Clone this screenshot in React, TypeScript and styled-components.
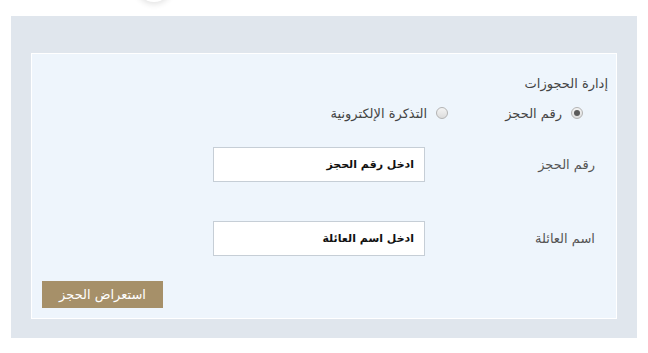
import React from "react";
import styled, { createGlobalStyle } from "styled-components";

const GlobalStyle = createGlobalStyle`
  html, body {
    margin: 0;
    padding: 0;
    background: #ffffff;
    font-family: "DejaVu Sans", "Noto Sans", sans-serif;
  }
`;

function App() {
  return (
    <>
      <GlobalStyle />
      <Page>
        <TopShadow />
        <Outer>
          <Card dir="rtl">
            <Heading>إدارة الحجوزات</Heading>
            <RadioRow>
              <RadioOption>
                <RadioInput type="radio" name="mode" defaultChecked />
                <RadioLabel>رقم الحجز</RadioLabel>
              </RadioOption>
              <RadioOption>
                <RadioInput type="radio" name="mode" />
                <RadioLabel>التذكرة الإلكترونية</RadioLabel>
              </RadioOption>
            </RadioRow>
            <FieldRow $top={24}>
              <FieldLabel>رقم الحجز</FieldLabel>
              <TextInput placeholder="ادخل رقم الحجز" />
            </FieldRow>
            <FieldRow $top={39}>
              <FieldLabel>اسم العائلة</FieldLabel>
              <TextInput placeholder="ادخل اسم العائلة" />
            </FieldRow>
            <Actions>
              <SubmitButton type="button">استعراض الحجز</SubmitButton>
            </Actions>
          </Card>
        </Outer>
      </Page>
    </>
  );
}

export default App;

const Page = styled.div({
  position: "relative",
  padding: "16px 11px 15px 11px",
  overflow: "hidden",
});

const TopShadow = styled.div({
  position: "absolute",
  top: -34,
  left: 136,
  width: 36,
  height: 36,
  borderRadius: "50%",
  background: "#ffffff",
  boxShadow: "0 2px 6px rgba(0,0,0,0.12)",
});

const Outer = styled.div({
  background: "#e0e6ed",
  padding: "37px 20px 19px 20px",
});

const Card = styled.div({
  background: "#eef5fc",
  border: "1px solid #ffffff",
  padding: "20px 8px 10px 10px",
});

const Heading = styled.div({
  fontSize: 13,
  lineHeight: "20px",
  color: "#444",
});

const RadioRow = styled.div({
  display: "flex",
  alignItems: "center",
  gap: 57,
  marginTop: 9,
  paddingRight: 25,
  height: 20,
});

const RadioOption = styled.label({
  display: "flex",
  alignItems: "center",
  gap: 9,
});

const RadioInput = styled.input({
  appearance: "none",
  margin: 0,
  width: 12,
  height: 12,
  borderRadius: "50%",
  border: "1px solid #b3b3b3",
  background: "linear-gradient(#f4f4f4, #dcdcdc)",
  position: "relative",
  "&:checked::after": {
    content: '""',
    position: "absolute",
    top: 2,
    left: 2,
    width: 6,
    height: 6,
    borderRadius: "50%",
    background: "#5a5a5a",
  },
});

const RadioLabel = styled.span({
  fontSize: 13,
  color: "#444",
});

const FieldRow = styled.div<{ $top: number }>(({ $top }) => ({
  display: "flex",
  alignItems: "center",
  gap: 20,
  marginTop: $top,
  paddingRight: 13,
}));

const FieldLabel = styled.span({
  width: 150,
  fontSize: 13,
  color: "#555",
});

const TextInput = styled.input({
  boxSizing: "border-box",
  width: 212,
  height: 35,
  border: "1px solid #c6ced6",
  background: "#ffffff",
  padding: "0 10px",
  fontFamily: "inherit",
  fontSize: 11,
  fontWeight: "bold",
  color: "#111",
  direction: "rtl",
  outline: "none",
  "&::placeholder": {
    color: "#111",
    opacity: 1,
  },
});

const Actions = styled.div({
  display: "flex",
  justifyContent: "flex-end",
  marginTop: 25,
});

const SubmitButton = styled.button({
  width: 121,
  height: 27,
  border: "none",
  background: "#a69069",
  color: "#ffffff",
  fontFamily: "inherit",
  fontSize: 13,
  padding: 0,
  cursor: "pointer",
});
